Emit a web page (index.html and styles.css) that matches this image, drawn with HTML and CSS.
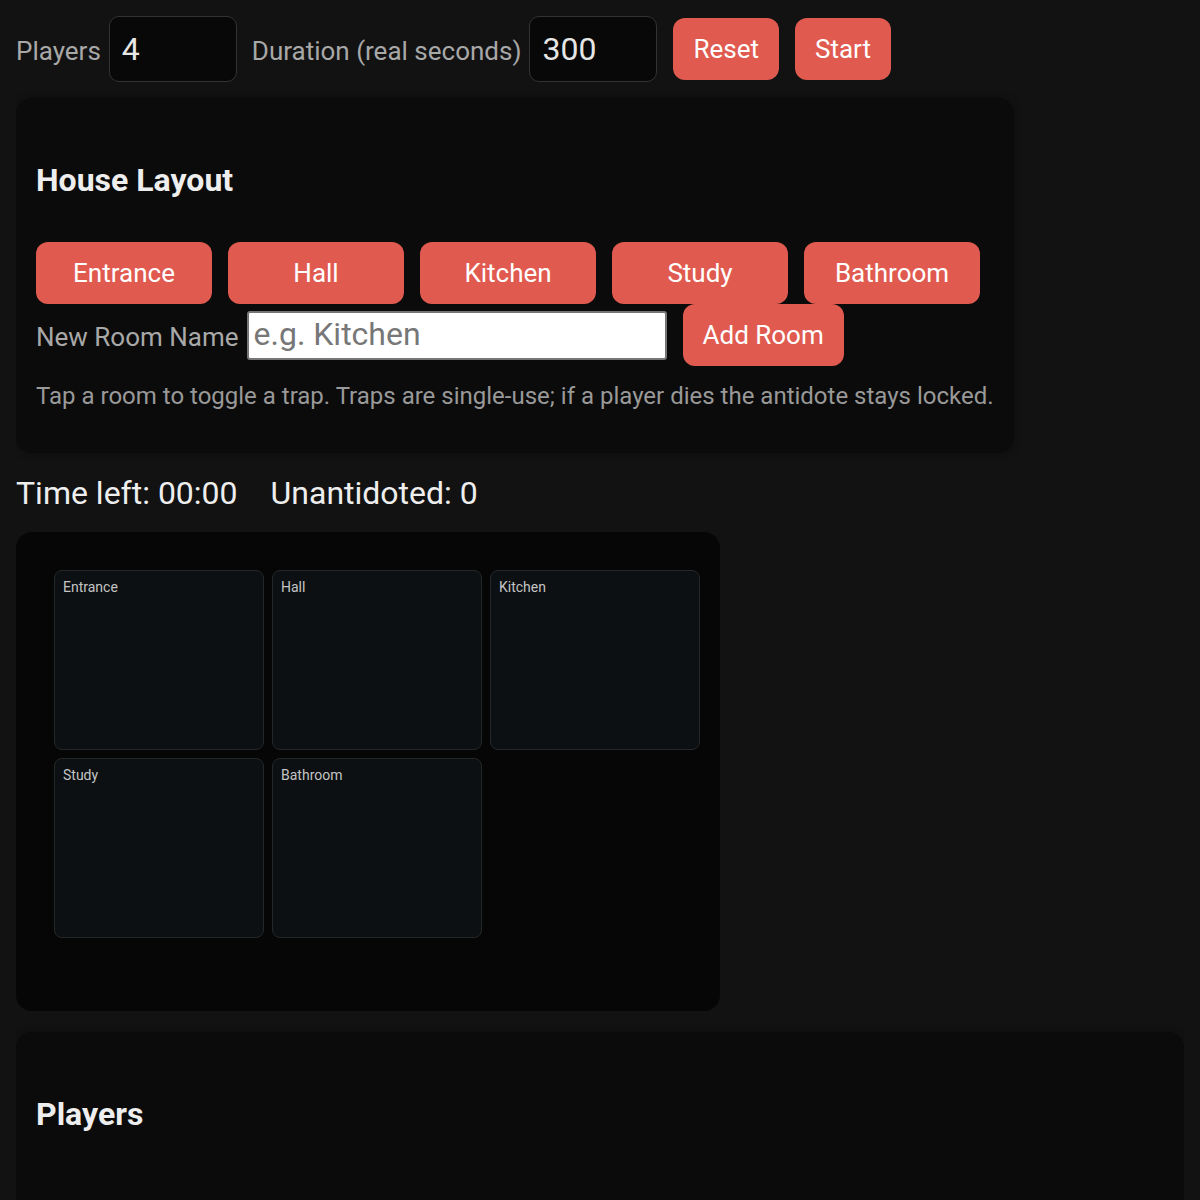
FILE: index.html
```html
<!DOCTYPE html>
<html lang="en">
<head>
    <meta charset="UTF-8">
    <meta name="viewport" content="width=device-width, initial-scale=1.0">
    <title>Antidote House</title>
    <link rel="stylesheet" href="styles.css">
</head>
<body>
    <!-- Game settings -->
    <div class="controls">
        <label for="players">Players</label>
        <input type="number" id="players" class="num-input" value="4">
        <label for="duration">Duration (real seconds)</label>
        <input type="number" id="duration" class="num-input" value="300">
        <button class="btn" id="resetBtn">Reset</button>
        <button class="btn" id="startBtn">Start</button>
    </div>

    <!-- House layout editor -->
    <div class="panel layout-panel">
        <h2>House Layout</h2>
        <div class="room-buttons">
            <button class="btn room-btn">Entrance</button>
            <button class="btn room-btn">Hall</button>
            <button class="btn room-btn">Kitchen</button>
            <button class="btn room-btn">Study</button>
            <button class="btn room-btn">Bathroom</button>
        </div>
        <div class="add-row">
            <label for="roomName">New Room Name</label>
            <input type="text" id="roomName" class="text-input" placeholder="e.g. Kitchen">
            <button class="btn" id="addRoomBtn">Add Room</button>
        </div>
        <p class="hint">Tap a room to toggle a trap. Traps are single-use; if a player dies the antidote stays locked.</p>
    </div>

    <div class="status">
        <span>Time left: 00:00</span>
        <span>Unantidoted: 0</span>
    </div>

    <!-- Board -->
    <div class="board">
        <div class="room-grid">
            <div class="room"><span class="room-name">Entrance</span></div>
            <div class="room"><span class="room-name">Hall</span></div>
            <div class="room"><span class="room-name">Kitchen</span></div>
            <div class="room"><span class="room-name">Study</span></div>
            <div class="room"><span class="room-name">Bathroom</span></div>
        </div>
    </div>

    <!-- Players -->
    <div class="panel players-panel">
        <h2>Players</h2>
    </div>
</body>
</html>
```

FILE: styles.css
```css
body {
    font-family: Roboto, "Noto Sans", Arial, sans-serif;
    background-color: #121212;
    color: #eee;
    margin: 16px;
}

.controls {
    display: flex;
    align-items: center;
    margin-bottom: 16px;
}

.controls label {
    font-size: 26px;
    color: #a8a8a8;
    margin-right: 8px;
    padding-top: 3px;
}

.num-input {
    width: 128px;
    height: 66px;
    box-sizing: border-box;
    background-color: #080808;
    border: 1px solid #333;
    border-radius: 10px;
    color: #e6e6e6;
    font-family: inherit;
    font-size: 32px;
    padding: 0 12px 0;
    margin-right: 15px;
    -moz-appearance: textfield;
}

    .num-input::-webkit-inner-spin-button,
    .num-input::-webkit-outer-spin-button {
        -webkit-appearance: none;
        margin: 0;
    }

.controls .btn {
    margin-left: 1px;
    margin-right: 15px;
}

.btn {
    height: 62px;
    padding: 0 20px;
    font-family: inherit;
    font-size: 26px;
    color: #fff;
    background-color: #e05a4f;
    border: none;
    border-radius: 12px;
    cursor: pointer;
}

    .btn:hover {
        background-color: #c94b41;
    }

.panel {
    background-color: #0b0b0b;
    border-radius: 16px;
    padding: 20px 20px;
    box-shadow: 0 0 8px rgba(0, 0, 0, 0.3);
}

.layout-panel {
    max-width: 958px;
    padding-bottom: 43px;
}

.panel h2 {
    font-size: 32px;
    font-weight: 700;
    line-height: 36px;
    margin: 44px 0 44px;
    color: #eee;
}

.room-buttons {
    display: flex;
    flex-wrap: wrap;
    gap: 0 16px;
}

.room-btn {
    width: 176px;
}

.add-row {
    display: flex;
    align-items: center;
}

    .add-row label {
        font-size: 26px;
        color: #a8a8a8;
        margin-right: 8px;
        padding-top: 3px;
    }

.text-input {
    width: 420px;
    height: 49px;
    box-sizing: border-box;
    border: 2px solid #767676;
    border-radius: 3px;
    background-color: #fff;
    font-family: inherit;
    font-size: 32px;
    padding: 0 5px 2px;
    margin-right: 16px;
}

    .text-input::placeholder {
        color: #777;
    }

.hint {
    font-size: 24px;
    line-height: 28px;
    color: #999;
    white-space: nowrap;
    margin: 16px 0 0 0;
}

.status {
    display: flex;
    gap: 33px;
    font-size: 32px;
    line-height: 36px;
    margin: 22px 0 21px 0;
}

.board {
    width: 704px;
    box-sizing: border-box;
    background-color: #060606;
    border-radius: 16px;
    padding: 38px 20px 73px 38px;
    margin-bottom: 21px;
}

.room-grid {
    display: grid;
    grid-template-columns: repeat(3, 210px);
    grid-auto-rows: 180px;
    gap: 8px;
}

.room {
    background-color: #0c1012;
    border: 1px solid #252829;
    border-radius: 8px;
    padding: 6px 8px;
}

.room-name {
    font-size: 14px;
    color: #c4c4c4;
}

.players-panel {
    min-height: 300px;
}
```
